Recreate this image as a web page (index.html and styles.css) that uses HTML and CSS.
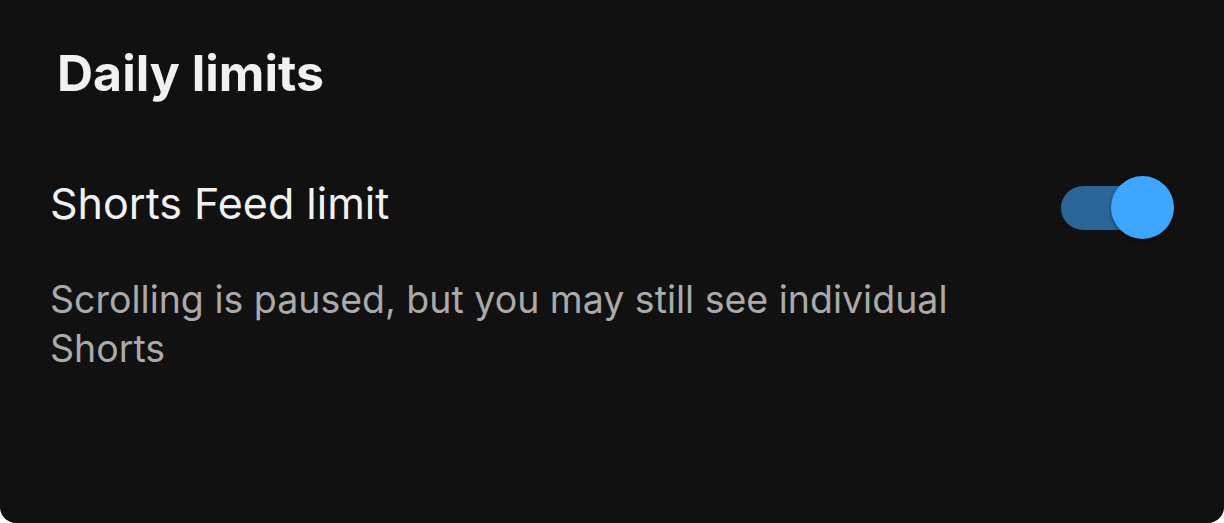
FILE: index.html
```html
<!DOCTYPE html>
<html lang="en">
<head>
    <meta charset="UTF-8">
    <meta name="viewport" content="width=device-width, initial-scale=1.0">
    <title>Daily limits</title>
    <link rel="stylesheet" href="styles.css">
</head>
<body>
    <div class="card">
        <h1>Daily limits</h1>

        <div class="setting">
            <div class="setting-row">
                <span class="setting-title">Shorts Feed limit</span>
                <div class="toggle on">
                    <div class="toggle-track"></div>
                    <div class="toggle-knob"></div>
                </div>
            </div>
            <p class="setting-desc">Scrolling is paused, but you may still see individual Shorts</p>
        </div>
    </div>
</body>
</html>
```

FILE: styles.css
```css
        body {
            font-family: 'Inter', 'Roboto', sans-serif;
            background: #FFFFFF;
            margin: 0;
            padding: 0;
        }

        .card {
            height: 100vh;
            box-sizing: border-box;
            background: #111111;
            color: #f1f1f1;
            border-radius: 0 0 16px 16px;
            padding: 44px 50px 0 50px;
        }

        h1 {
            font-size: 50px;
            font-weight: 700;
            line-height: 58px;
            margin: 0 0 0 7px;
        }

        .setting {
            margin-top: 76px;
        }

        .setting-row {
            display: flex;
            justify-content: space-between;
            align-items: flex-start;
        }

        .setting-title {
            font-size: 43px;
            font-weight: 400;
            line-height: 50px;
        }

        .setting-desc {
            font-size: 37.5px;
            line-height: 49px;
            color: #aaaaaa;
            margin: 36px 0 0 0;
            max-width: 940px;
        }

        /* switch, knob sits over the right end of the track */
        .toggle {
            position: relative;
            width: 113px;
            height: 63px;
            margin-top: -2px;
        }

        .toggle-track {
            position: absolute;
            left: 0;
            top: 10px;
            width: 92px;
            height: 44px;
            border-radius: 22px;
            background: #2b6597;
        }

        .toggle-knob {
            position: absolute;
            right: 0;
            top: 0;
            width: 63px;
            height: 63px;
            border-radius: 50%;
            background: #3ea6ff;
            box-shadow: 0 2px 4px rgba(0, 0, 0, 0.4);
        }
```
